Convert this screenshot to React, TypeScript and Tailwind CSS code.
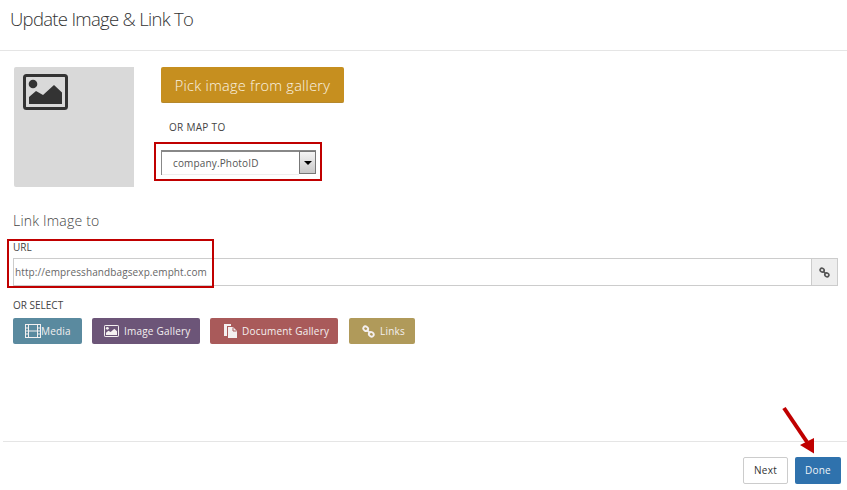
import React from 'react';

const font = { fontFamily: '"Open Sans", sans-serif' };

function PictureIcon({ className }: { className?: string }) {
  return (
    <svg viewBox="0 0 45 36" className={className}>
      <rect x="1.5" y="1.5" width="42" height="33" rx="2" fill="none" stroke="currentColor" strokeWidth="3" />
      <circle cx="10" cy="10" r="4.3" fill="currentColor" />
      <path d="M6 30 V23 L13 17 L20 21 L31 11 L39 18.500 V30 Z" fill="currentColor" />
    </svg>
  );
}

function FilmIcon() {
  return (
    <svg viewBox="0 0 16 14" className="w-4 h-[14px]" fill="none" stroke="currentColor" strokeWidth="1">
      <rect x="0.500" y="0.500" width="15" height="13" />
      <path d="M3.500 0.500 V13.500 M12.500 0.500 V13.500 M0.500 4 H3.500 M0.500 7 H15.500 M0.500 10 H3.500 M12.500 4 H15.500 M12.500 10 H15.500" />
    </svg>
  );
}

function DocsIcon() {
  return (
    <svg viewBox="0 0 15 16" className="w-[15px] h-4">
      <path d="M1 1 H8 V3 H4 V13 H1 Z" fill="currentColor" />
      <path d="M5 4 H10 L14 8 V15 H5 Z" fill="currentColor" />
      <path d="M10 4.500 V8 H13.500" fill="none" stroke="#a95a5a" strokeWidth="1" />
    </svg>
  );
}

function ChainIcon({ className }: { className?: string }) {
  return (
    <svg viewBox="0 0 14 14" className={className} fill="none" stroke="currentColor" strokeWidth="2">
      <ellipse cx="4" cy="4" rx="2.700" ry="2.300" transform="rotate(35 4 4)" />
      <ellipse cx="10" cy="10" rx="2.700" ry="2.300" transform="rotate(35 10 10)" />
      <path d="M5 5 L9 9" />
    </svg>
  );
}

function ActionButton({ className, children }: { className: string; children: React.ReactNode }) {
  return (
    <button className={`${className} h-[26px] rounded-[2px] flex items-center justify-start text-[#f4f0f0] text-[10px] tracking-[0.2px]`}>
      {children}
    </button>
  );
}

export default function App() {
  return (
    <div className="relative w-[847px] h-[490px] overflow-hidden bg-white text-[#333]" style={font}>
      {/* Header */}
      <div className="h-[51px] border-b border-[#e5e5e5] pl-[10px] pt-[6px]">
        <h1 className="text-[18.500px] leading-[26px] font-light tracking-[-0.7px] text-[#333]">Update Image &amp; Link To</h1>
      </div>

      {/* Picker */}
      <div className="flex pl-[14px] pt-4 h-[152px]">
        <div className="w-[120px] h-[120px] bg-[#d9d9d9] rounded-l-[2px] pl-[9px] pt-[7px] text-[#333]">
          <PictureIcon className="w-[45px] h-[36px]" />
        </div>
        <div className="ml-[27px]">
          <button className="w-[183px] h-9 pt-[2px] bg-[#c68f1f] border-b border-[#b5882c] rounded-[2px] text-[#faf3e3] text-[14.500px] font-light tracking-[0.25px]">
            Pick image from gallery
          </button>
          <div className="pl-2 mt-[17px] text-[10px] leading-[14px] tracking-[0.3px] text-[#444]">OR MAP TO</div>
          <div className="mt-[16px] w-[155px] h-[25px] flex border-t-2 border-l border-[#888] border-b-0">
            <div className="flex-1 pl-[11px] text-[10px] leading-[22px] tracking-[0.15px] text-[#555] border-b border-[#eee]">company.PhotoID</div>
            <div className="w-[17px] h-[23px] -mt-px border border-[#777] bg-gradient-to-b from-[#f4f4f4] to-[#c8c8c8] flex items-center justify-center">
              <div className="w-0 h-0 border-l-[4px] border-r-[4px] border-t-[4px] border-l-transparent border-r-transparent border-t-black" />
            </div>
          </div>
        </div>
      </div>

      {/* Link section */}
      <div className="pl-[13px] pr-[9px] pt-[8px]">
        <h2 className="text-[14px] leading-[20px] font-light tracking-[0.2px] text-[#444]">Link Image to</h2>
        <label className="block mt-[9px] text-[10px] leading-[14px] text-[#444]">URL</label>
        <div className="mt-[4px] flex h-[28px] border border-[#ccc]">
          <div className="flex-1 pl-px text-[10px] leading-[27px] tracking-[0.1px] text-[#666]">http://empresshandbagsexp.empht.com</div>
          <div className="w-[26px] bg-[#eee] border-l border-[#ccc] flex items-center justify-center text-[#555]">
            <ChainIcon className="w-[11px] h-[11px]" />
          </div>
        </div>
        <div className="mt-[12px] text-[10px] leading-[14px] text-[#444]">OR SELECT</div>
        <div className="mt-[6px] flex">
          <ActionButton className="bg-[#5a8a9f] w-[69px] pl-3">
            <FilmIcon />
            <span>Media</span>
          </ActionButton>
          <div className="w-[10px]" />
          <ActionButton className="bg-[#6c5578] w-[108px] pl-3">
            <PictureIcon className="w-[15px] h-[12px] mr-[5px]" />
            <span>Image Gallery</span>
          </ActionButton>
          <div className="w-[10px]" />
          <ActionButton className="bg-[#a95a5a] w-[128px] pl-[13px]">
            <DocsIcon />
            <span className="ml-1">Document Gallery</span>
          </ActionButton>
          <div className="w-[11px]" />
          <ActionButton className="bg-[#b09a5a] w-[66px] pl-[13px]">
            <ChainIcon className="w-[13px] h-[13px] mr-[5px]" />
            <span>Links</span>
          </ActionButton>
        </div>
      </div>

      {/* Footer */}
      <div className="mt-[97px] ml-[3px] border-t border-[#e5e5e5] pt-[15px] pr-[6px] flex justify-end gap-[7px]">
        <button className="w-[45px] h-[27px] bg-white border border-[#ccc] rounded-[2px] text-[10px] tracking-[0.3px] text-[#333]">Next</button>
        <button className="w-[46px] h-[27px] bg-[#2f72ad] rounded-[2px] text-[10px] tracking-[0.2px] text-[#f0f4f8]">Done</button>
      </div>

      {/* Annotations over the screenshot */}
      <div className="absolute left-[154px] top-[142px] w-[168px] h-[39px] border-2 border-[#c00000]" />
      <div className="absolute left-[7px] top-[239px] w-[207px] h-[49px] border-2 border-[#c00000]" />
      <svg className="absolute left-[775px] top-[400px] w-[50px] h-[60px]" viewBox="0 0 50 60">
        <path d="M9 8 L32 42" stroke="#c00000" strokeWidth="4" />
        <path d="M39 53.500 L25 45 L39 38 Z" fill="#c00000" />
      </svg>
    </div>
  );
}
